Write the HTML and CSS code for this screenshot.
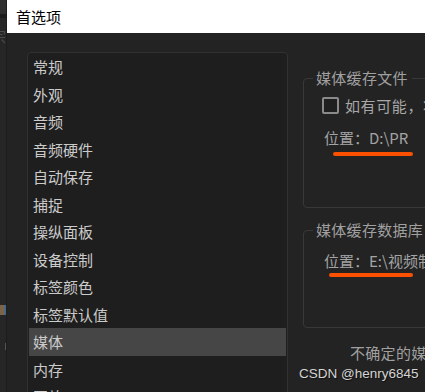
FILE: index.html
```html
<!DOCTYPE html>
<html lang="zh-CN">

<head>
    <meta charset="UTF-8">
    <meta name="viewport" content="width=device-width, initial-scale=1.0">
    <title>首选项</title>
    <link rel="stylesheet" href="styles.css">
</head>

<body>
    <div class="screen">
        <div class="behind">
            <div class="behindtop"></div>
            <div class="behindtext">宗</div>
            <div class="behindicon"></div>
            <div class="behindmark"></div>
        </div>

        <div class="dialog">
            <div class="titlebar">首选项</div>

            <div class="content">
                <ul class="menu">
                    <li>常规</li>
                    <li>外观</li>
                    <li>音频</li>
                    <li>音频硬件</li>
                    <li>自动保存</li>
                    <li>捕捉</li>
                    <li>操纵面板</li>
                    <li>设备控制</li>
                    <li>标签颜色</li>
                    <li>标签默认值</li>
                    <li class="active">媒体</li>
                    <li>内存</li>
                    <li>回放</li>
                </ul>

                <div class="settings">
                    <fieldset class="group">
                        <legend>媒体缓存文件</legend>
                        <label class="check"><span class="box"></span>如有可能，将媒体缓存文件保存在原始文件旁边</label>
                        <div class="location">位置：D:\PR</div>
                        <div class="mark"></div>
                    </fieldset>

                    <fieldset class="group second">
                        <legend>媒体缓存数据库</legend>
                        <div class="location">位置：E:\视频制作\缓存</div>
                        <div class="mark wide"></div>
                    </fieldset>

                    <div class="note">不确定的媒体时间码格式</div>
                </div>
            </div>
        </div>

        <div class="watermark">CSDN @henry6845</div>
    </div>
</body>

</html>
```

FILE: styles.css
```css
body {
    margin: 0;
    padding: 0;
    background-color: #232323;
    font-family: 'Noto Sans CJK SC', 'Noto Sans', sans-serif;
    overflow: hidden;
}

.screen {
    position: relative;
    display: flex;
    width: 425px;
    height: 392px;
    overflow: hidden;
}

.behind {
    width: 6px;
    flex-shrink: 0;
    background-color: #262626;
    border-right: 1px solid #1c1c1c;
    overflow: hidden;
}

.behindtop {
    height: 14px;
    background-color: #2e2e2e;
    border-bottom: 4px solid #1b1b1b;
}

.behindtext {
    margin: 9px 0 0 -9px;
    color: #4c4c4c;
    font-size: 15px;
    line-height: 18px;
}

.behindicon {
    width: 4px;
    height: 10px;
    margin-top: 260px;
    background-color: #7d6448;
    border-right: 2px solid #4a6a8a;
}

.behindmark {
    width: 1px;
    height: 7px;
    margin: 28px 0 0 5px;
    background-color: #555555;
}

.dialog {
    flex: 1;
    display: flex;
    flex-direction: column;
    min-width: 0;
}

.titlebar {
    height: 35px;
    line-height: 33px;
    padding-left: 9px;
    background-color: #ffffff;
    color: #000000;
    font-size: 15px;
}

.content {
    display: flex;
    padding: 19px 0 0 20px;
    background-color: #232323;
    flex: 1;
}

.menu {
    list-style: none;
    margin: 0;
    padding: 0 1px;
    width: 257px;
    height: 400px;
    flex-shrink: 0;
    background-color: #1e1e1e;
    border: 1px solid #313131;
    border-radius: 4px 4px 0 0;
}

.menu li {
    height: 27.5px;
    line-height: 27.5px;
    padding-left: 4px;
    color: #cbcbcb;
    font-size: 15px;
    white-space: nowrap;
}

.menu li.active {
    background-color: #464646;
}

.settings {
    flex: 1;
    min-width: 0;
    overflow: hidden;
}

.group {
    width: 220px;
    margin: 16px 0 0 15px;
    padding: 0 0 51px 20px;
    border: 1px solid #383838;
    border-radius: 4px;
}

.group legend {
    margin-left: -11px;
    padding: 0 4px 0 3px;
    line-height: 20px;
    color: #a0a0a0;
    font-size: 15px;
    letter-spacing: 0.3px;
}

.group.second {
    margin-top: 12px;
    padding-bottom: 50px;
}

.check {
    display: flex;
    align-items: center;
    margin: 7px 0 0 -2px;
    height: 20px;
    color: #a8a8a8;
    font-size: 15px;
    letter-spacing: 0.6px;
    white-space: nowrap;
}

.box {
    width: 13px;
    height: 13px;
    margin-right: 6px;
    border: 2px solid #8a8a8a;
    border-radius: 2px;
    background-color: #1f1f1f;
    flex-shrink: 0;
}

.location {
    margin-top: 13px;
    height: 20px;
    line-height: 20px;
    color: #a4a4a4;
    font-size: 15px;
    white-space: nowrap;
}

.second .location {
    margin-top: 11px;
}

.mark {
    width: 80px;
    height: 4px;
    margin: 4px 0 0 9px;
    background-color: #fa5000;
    border-radius: 2px;
}

.mark.wide {
    width: 84px;
    margin: 2px 0 0 5px;
}

.note {
    margin: 15px 0 0 62px;
    line-height: 20px;
    color: #a0a0a0;
    font-size: 15px;
    white-space: nowrap;
    letter-spacing: 0.3px;
}

.watermark {
    position: absolute;
    left: 299px;
    top: 365px;
    color: #d4d4d4;
    font-family: 'Liberation Sans', Arial, sans-serif;
    font-size: 13.5px;
    line-height: 18px;
    text-shadow: 1px 1px 1px #111111;
}
```
